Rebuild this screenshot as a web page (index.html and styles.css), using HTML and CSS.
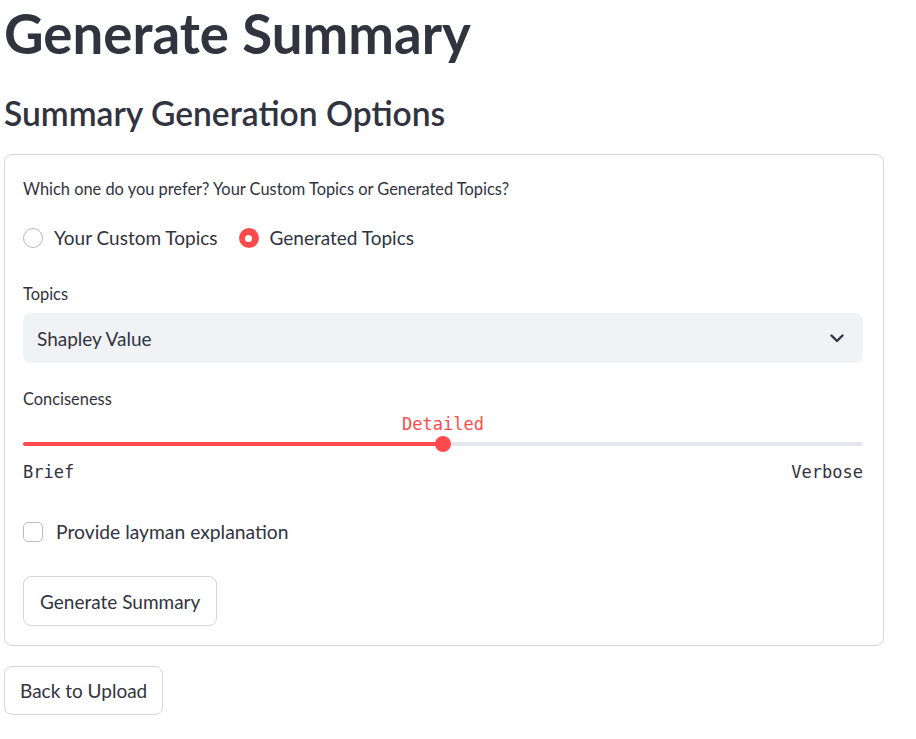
FILE: index.html
```html
<!DOCTYPE html>
<html lang="en">
<head>
<meta charset="utf-8">
<title>Generate Summary</title>
<link rel="stylesheet" href="styles.css">
</head>
<body>
<main class="page">
  <h1 class="title">Generate Summary</h1>
  <h2 class="subtitle">Summary Generation Options</h2>
  <form class="panel">
    <p class="field-label">Which one do you prefer? Your Custom Topics or Generated Topics?</p>
    <div class="radio-group">
      <label class="radio"><span class="radio-dot"></span><span>Your Custom Topics</span></label>
      <label class="radio radio-checked"><span class="radio-dot"></span><span>Generated Topics</span></label>
    </div>
    <p class="field-label label-topics">Topics</p>
    <div class="select">
      <span class="select-value">Shapley Value</span>
      <svg class="chevron" width="14" height="9" viewBox="0 0 14 9" aria-hidden="true"><polyline points="1.5,1.5 7,7 12.5,1.5" fill="none" stroke="#31333f" stroke-width="2.4" stroke-linecap="round" stroke-linejoin="round"/></svg>
    </div>
    <p class="field-label label-conc">Conciseness</p>
    <div class="slider">
      <div class="slider-track">
        <div class="slider-rail"><div class="slider-fill" style="width:50%"></div></div>
        <span class="slider-thumb" style="left:50%"></span>
        <span class="slider-value" style="left:50%">Detailed</span>
      </div>
      <div class="slider-ticks"><span>Brief</span><span>Verbose</span></div>
    </div>
    <label class="checkbox"><span class="checkbox-box"></span><span class="checkbox-text">Provide layman explanation</span></label>
    <button type="button" class="btn btn-panel">Generate Summary</button>
  </form>
  <button type="button" class="btn btn-back">Back to Upload</button>
</main>
</body>
</html>
```

FILE: styles.css
```css
* { box-sizing: border-box; }

body {
  margin: 0;
  background: #ffffff;
  color: #31333f;
  font-family: Lato, "Source Sans Pro", sans-serif;
}

.page {
  width: 880px;
  margin-left: 4px;
  display: flex;
  flex-direction: column;
  align-items: flex-start;
}

.title {
  margin: 0;
  font-size: 54.6px;
  line-height: 66px;
  font-weight: 700;
  white-space: nowrap;
}

.subtitle {
  margin: 27px 0 0;
  font-size: 33.6px;
  line-height: 40px;
  font-weight: 600;
  white-space: nowrap;
}

.panel {
  margin-top: 21px;
  width: 880px;
  border: 1px solid #d6d6d9;
  border-radius: 8px;
  padding: 23px 20px 19px 18px;
  display: flex;
  flex-direction: column;
  align-items: stretch;
}

.field-label {
  margin: 0;
  font-size: 16.4px;
  line-height: 22px;
}

.radio-group {
  margin-top: 26px;
  height: 24px;
  display: flex;
  align-items: center;
  gap: 21px;
}

.radio {
  display: flex;
  align-items: center;
  gap: 11px;
  font-size: 19px;
  line-height: 24px;
}

.radio-dot {
  flex: none;
  width: 20px;
  height: 20px;
  border-radius: 50%;
  border: 1px solid #b9bac0;
  background: #ffffff;
}

.radio-checked .radio-dot {
  border: none;
  background: #ff4b4b;
  display: flex;
  align-items: center;
  justify-content: center;
}

.radio-checked .radio-dot::after {
  content: "";
  width: 7px;
  height: 7px;
  border-radius: 50%;
  background: #ffffff;
}

.label-topics { margin-top: 33px; }

.select {
  margin-top: 8px;
  height: 50px;
  background: #f0f2f6;
  border-radius: 8px;
  display: flex;
  align-items: center;
  justify-content: space-between;
  padding: 0 19px 0 14px;
  font-size: 19px;
}

.chevron { display: block; }

.label-conc { margin-top: 25px; }

.slider { padding-top: 26px; }

.slider-track {
  position: relative;
  height: 16px;
  display: flex;
  align-items: center;
}

.slider-rail {
  flex: 1;
  height: 4px;
  border-radius: 2px;
  background: #e4e7ee;
  overflow: hidden;
}

.slider-fill {
  height: 100%;
  background: #ff4b4b;
}

.slider-thumb {
  position: absolute;
  top: 0;
  width: 16px;
  height: 16px;
  margin-left: -8px;
  border-radius: 50%;
  background: #ff4b4b;
}

.slider-value {
  position: absolute;
  bottom: calc(100% + 2px);
  transform: translateX(-50%);
  font-family: "DejaVu Sans Mono", "Liberation Mono", monospace;
  font-size: 17px;
  line-height: 20px;
  color: #ff4b4b;
  white-space: nowrap;
}

.slider-ticks {
  margin-top: 10px;
  display: flex;
  justify-content: space-between;
  font-family: "DejaVu Sans Mono", "Liberation Mono", monospace;
  font-size: 17px;
  line-height: 20px;
}

.checkbox {
  margin-top: 38px;
  display: flex;
  align-items: center;
  gap: 13px;
  font-size: 19px;
  line-height: 24px;
}

.checkbox-text { font-size: 19.3px; }

.checkbox-box {
  flex: none;
  width: 20px;
  height: 20px;
  border: 1px solid #b9bac0;
  border-radius: 5px;
  background: #ffffff;
}

.btn {
  height: 50px;
  padding: 0 16px;
  border: 1px solid #d6d6d9;
  border-radius: 8px;
  background: #ffffff;
  color: #31333f;
  font-family: inherit;
  font-size: 19px;
}

.btn-panel {
  align-self: flex-start;
  margin-top: 32px;
}

.btn-back {
  margin-top: 20px;
  height: 49px;
  padding: 0 15px;
}
```
